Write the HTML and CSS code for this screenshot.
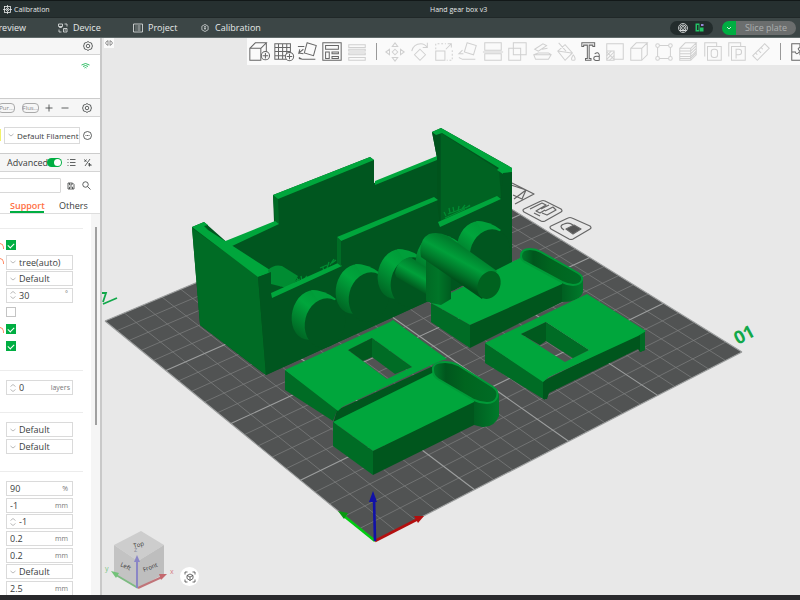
FILE: index.html
```html
<!DOCTYPE html>
<html lang="en">
<head>
<meta charset="utf-8">
<title>Hand gear box v3</title>
<link rel="stylesheet" href="styles.css">
</head>
<body>
<div class="app">
  <header class="titlebar">
    <a class="crumb" href="#calibration"><svg class="ic9" viewBox="0 0 18 18"><rect x="3" y="3" width="12" height="12"/><path d="M9 0v7M9 11v7M0 9h7M11 9h7M6 6l6 6M12 6l-6 6"/></svg>Calibration</a>
    <h1>Hand gear box v3</h1>
  </header>
  <nav class="tabs">
    <a class="tab tab-preview" href="#preview">Preview</a>
    <a class="tab tab-device" href="#device"><svg class="ic10" viewBox="0 0 20 20"><path d="M1 2h8v5H1zM3 7v2h4V7M13 2h5v5M2 13v5h5M11 11h7v7h-7zM13 14h3"/></svg>Device</a>
    <a class="tab tab-project" href="#project"><svg class="ic10" viewBox="0 0 20 20"><path d="M1 2h18v16H1zM5 6h2M9 6h6M5 10h2M9 10h6M5 14h2M9 14h6"/></svg>Project</a>
    <a class="tab tab-calib" href="#calibration"><svg class="ic8" viewBox="0 0 18 18"><path d="M9 1l7 4v8l-7 4-7-4V5z"/><path d="M9 5v8M7 7l2-2 2 2M7 10h4"/></svg>Calibration</a>
    <div class="actions">
      <div class="pill">
        <button type="button" aria-label="Target"><svg class="ic10" viewBox="0 0 20 20"><circle cx="10" cy="10" r="9"/><circle cx="10" cy="10" r="6"/><circle cx="10" cy="10" r="3"/><path d="M3 15h14"/></svg></button>
        <button type="button" aria-label="Layout"><svg class="ic9" viewBox="0 0 18 18"><path class="lime" d="M1 1h8v16H1zM10 9h7v8h-7z"/><path class="core" d="M4 4h3v10H4z"/><path class="violet" d="M12 2h5v4h-5z"/></svg></button>
      </div>
      <div class="slice">
        <button type="button" class="slice-menu" aria-label="Slice options"><svg class="ic6" viewBox="0 0 12 12"><path d="M2 4l4 4 4-4"/></svg></button>
        <button type="button" class="slice-go">Slice plate</button>
      </div>
    </div>
  </nav>

  <main class="work">
    <aside class="side">
      <div class="bar bar-top"><button type="button" aria-label="Printer settings"><svg class="ic10" viewBox="0 0 20 20"><path d="M10 1l3 2 4 1 1 4 1 2-1 2-1 4-4 1-3 2-3-2-4-1-1-4-1-2 1-2 1-4 4-1z"/><circle cx="10" cy="10" r="3.5"/></svg></button></div>
      <div class="printer"><svg class="wifi" viewBox="0 0 18 14"><path d="M1 5q8-6 16 0M4 8q5-4 10 0M7 11q2-2 4 0"/></svg></div>
      <div class="bar bar-fil">
        <button type="button" class="chip chip-cut">Pur...</button>
        <button type="button" class="chip">Flus...</button>
        <button type="button" class="add" aria-label="Add filament"><svg class="ic8" viewBox="0 0 16 16"><path d="M8 1v14M1 8h14"/></svg></button>
        <button type="button" class="rem" aria-label="Remove filament"><svg class="ic8" viewBox="0 0 16 16"><path d="M1 8h14"/></svg></button>
        <button type="button" class="gear" aria-label="Filament settings"><svg class="ic10" viewBox="0 0 20 20"><path d="M10 1l3 2 4 1 1 4 1 2-1 2-1 4-4 1-3 2-3-2-4-1-1-4-1-2 1-2 1-4 4-1z"/><circle cx="10" cy="10" r="3.5"/></svg></button>
      </div>
      <div class="filament">
        <span class="swatch"></span>
        <label class="sel sel-fil"><svg class="ic6" viewBox="0 0 12 12"><path d="M1 4l5 4 5-4"/></svg><select aria-label="Filament"><option>Default Filament</option></select></label>
        <button type="button" aria-label="More"><svg class="ic9" viewBox="0 0 18 18"><circle cx="9" cy="9" r="8"/><path d="M5 9h2M8 9h2M11 9h2"/></svg></button>
      </div>
      <div class="bar bar-adv">
        <label class="adv" for="adv">Advanced</label><input id="adv" class="toggle" type="checkbox" checked>
        <button type="button" aria-label="List"><svg class="ic9" viewBox="0 0 18 18"><path d="M1 3h2M6 3h11M1 9h2M6 9h11M1 15h2M6 15h11"/></svg></button>
        <button type="button" aria-label="Compare"><svg class="ic9" viewBox="0 0 18 18"><path d="M4 16L14 2M2 3l5 4M3 8l4-5M11 10l5 5M10 14h7M13 10v7"/></svg></button>
      </div>
      <div class="find">
        <input type="text" aria-label="Search preset">
        <button type="button" aria-label="Save"><svg class="ic8" viewBox="0 0 16 16"><path d="M2 2h9l3 3v9H2zM5 2v4h5V2M5 14v-4h6v4"/></svg></button>
        <button type="button" aria-label="Search"><svg class="ic9" viewBox="0 0 18 18"><circle cx="7" cy="7" r="5.5"/><path d="M11 11l6 6"/></svg></button>
      </div>
      <div class="subtabs"><a class="on" href="#support">Support</a><a href="#others">Others</a></div>
      <div class="params">
        <div class="list">
          <section class="rows7">
            <div class="row undo"><input type="checkbox" aria-label="Enable support" checked></div>
            <div class="row undo"><label class="sel"><svg class="ic6" viewBox="0 0 12 12"><path d="M1 4l5 4 5-4"/></svg><select aria-label="Type"><option>tree(auto)</option></select></label></div>
            <div class="row"><label class="sel"><svg class="ic6" viewBox="0 0 12 12"><path d="M1 4l5 4 5-4"/></svg><select aria-label="Style"><option>Default</option></select></label></div>
            <div class="row"><label class="sel"><svg class="ic6 spin" viewBox="0 0 12 20"><path d="M1 7l5-4 5 4M1 13l5 4 5-4"/></svg><input type="text" value="30" aria-label="Threshold angle"><span class="deg">°</span></label></div>
            <div class="row"><input type="checkbox" aria-label="On build plate only"></div>
            <div class="row undo"><input type="checkbox" aria-label="Critical regions only" checked></div>
            <div class="row"><input type="checkbox" aria-label="Remove small overhangs" checked></div>
          </section>
          <section class="rows1">
            <div class="row"><label class="sel"><svg class="ic6 spin" viewBox="0 0 12 20"><path d="M1 7l5-4 5 4M1 13l5 4 5-4"/></svg><input type="text" value="0" aria-label="Raft layers"><span class="wide-unit">layers</span></label></div>
          </section>
          <section class="rows2">
            <div class="row"><label class="sel"><svg class="ic6" viewBox="0 0 12 12"><path d="M1 4l5 4 5-4"/></svg><select aria-label="Base filament"><option>Default</option></select></label></div>
            <div class="row"><label class="sel"><svg class="ic6" viewBox="0 0 12 12"><path d="M1 4l5 4 5-4"/></svg><select aria-label="Interface filament"><option>Default</option></select></label></div>
          </section>
          <section class="rows7">
            <div class="row"><label class="sel"><input type="text" value="90" aria-label="First layer density"><span>%</span></label></div>
            <div class="row"><label class="sel"><input type="text" value="-1" aria-label="First layer expansion"><span>mm</span></label></div>
            <div class="row"><label class="sel"><svg class="ic6 spin" viewBox="0 0 12 20"><path d="M1 7l5-4 5 4M1 13l5 4 5-4"/></svg><input type="text" value="-1" aria-label="Wall loops"></label></div>
            <div class="row"><label class="sel"><input type="text" value="0.2" aria-label="Top Z distance"><span>mm</span></label></div>
            <div class="row"><label class="sel"><input type="text" value="0.2" aria-label="Bottom Z distance"><span>mm</span></label></div>
            <div class="row"><label class="sel"><svg class="ic6" viewBox="0 0 12 12"><path d="M1 4l5 4 5-4"/></svg><select aria-label="Base pattern"><option>Default</option></select></label></div>
            <div class="row"><label class="sel"><input type="text" value="2.5" aria-label="Base pattern spacing"><span>mm</span></label></div>
          </section>
        </div>
        <div class="scroll"><i></i></div>
      </div>
    </aside>

    <div class="view">
      <svg class="scene" viewBox="102 38 698 557" preserveAspectRatio="xMinYMin slice" role="img" aria-label="Build plate with gear box parts">
        <defs>
          <linearGradient id="shaft" gradientUnits="userSpaceOnUse" x1="465" y1="248" x2="449" y2="277"><stop offset="0" stop-color="#007c2c"/><stop offset=".4" stop-color="#009f3a"/><stop offset=".7" stop-color="#007a2b"/><stop offset="1" stop-color="#004f1a"/></linearGradient>
          <linearGradient id="stub" gradientUnits="userSpaceOnUse" x1="418" y1="263" x2="406" y2="284"><stop offset="0" stop-color="#007c2c"/><stop offset=".45" stop-color="#00a03a"/><stop offset="1" stop-color="#00561d"/></linearGradient>
          <linearGradient id="disc" gradientUnits="userSpaceOnUse" x1="320" y1="290" x2="298" y2="338"><stop offset="0" stop-color="#009536"/><stop offset=".4" stop-color="#00a63c"/><stop offset="1" stop-color="#006122"/></linearGradient>
          <linearGradient id="post"><stop offset="0" stop-color="#006a24"/><stop offset=".5" stop-color="#007528"/><stop offset="1" stop-color="#005c20"/></linearGradient>
          <linearGradient id="boss"><stop offset="0" stop-color="#005f21"/><stop offset="1" stop-color="#007b2b"/></linearGradient>
          <linearGradient id="slot"><stop offset="0" stop-color="#007a2b"/><stop offset=".2" stop-color="#00561d"/><stop offset=".5" stop-color="#00651f"/><stop offset="1" stop-color="#006c25"/></linearGradient>
          <g id="wheel"><ellipse cx="311" cy="315" rx="19" ry="25" transform="rotate(14 311 315)" fill="url(#disc)"/><path d="M311 290q14 0 25 9l-12 12z" fill="#009f3a"/><ellipse cx="325" cy="323" rx="20" ry="25" transform="rotate(14 325 323)" fill="#00561f"/></g>
        </defs>
        <path d="M105 321L375 541 742 352 455 174z" fill="#515353"/>
        <g id="grid" fill="none"></g>

        <g fill="none" stroke="#666" stroke-width="1.2" stroke-linejoin="round">
          <path d="M512 183L534 194 515 204M511 185l15 5-4 9-9-4M514 199l12-9"/>
          <path d="M524 209L541 201q2-1 4 0L561 209q2 2 0 3L545 221q-2 1-4 0L524 212q-2-2 0-3z"/><path d="M530 209l12-6 4 2-10 6 4 2 5-3M541 209l8-4M545 211l8-4 3 3-9 5-5-2M534 213l6 3"/>
          <path d="M551 226L568 218q2-1 4 0L590 226q2 2 0 3L573 239q-2 1-4 0L551 229q-2-2 0-3z"/><path d="M564 230q-6-4 0-6 5-2 9 1"/><path d="M566 229l8-4 7 4-8 5z" fill="#555"/>
        </g>
        <text x="738" y="345" class="plate-no" transform="rotate(-28 738 345)">01</text>
        <path d="M102 293h4l-3 9M103 304l14-6" fill="none" stroke="#12a84a" stroke-width="1.8"/>

        <!-- gear box shell -->
        <path fill="#00561f" d="M192 227L204 222 230 245 274 222 273 195 370 157 374 160V183L437 158 432 132 441 128 512 168V263L266 375 200 325z"/>
        <path fill="#006322" d="M441 133L499 170 501 197 441 224z"/>
        <path fill="#00531c" d="M432 132L440 134V222L437 222 437 158z"/>
        <path fill="#006c25" d="M192 228L258 276 266 375 200 325z"/>
        <path fill="#006a24" d="M273 195L278 199 279 224 275 222z"/>
        <path fill="#00a63c" d="M273 195L370 157 374 160 278 199zM223 242L275 221 279 224 230 247zM375 181L437 156 437 160 375 185zM432 132L441 128 512 168 512 172 503 174 497 170 499 168 442 133 436 135zM192 227L204 222 208 225V230L270 270 270 273 258 277z"/>
        <path fill="#005a1e" d="M204 226l4-1v5z"/>
        <path fill="#008c32" d="M268 270q6-6 14-4L298 276 291 289 271 284z"/>
        <path fill="none" stroke="#008c32" stroke-width="1.3" d="M280 286l6-3M286 286l5-5M288 284l6-4M292 285l2-7M294 282l6-3M299 284l-2-6M302 281l-1-5M303 281l4-5M320 268l7-3M324 273l-1-6M327 268l2-6M330 265l4-6M332 263l4-3M446 216l-2-4M450 213l-1-5M454 212l-1-5M458 211l1-5M462 209l3-4M466 208l4-3M448 214l22-8M445 218l20-9"/>
        <path fill="#00561f" d="M271 297L338 266 337 240 437 201 440 225 501 198 503 173 512 172V263L266 375 258 277 271 272z"/>
        <path fill="#00a63c" d="M271 293L338 263 342 266 272 298zM337 237L434 197 438 200 341 241zM438 222L497 196 501 199 440 227z"/>
        <path fill="#006c25" d="M337 237L341 241V266L337 263z"/>
        <use href="#wheel"/><use href="#wheel" x="44" y="-26"/><use href="#wheel" x="86" y="-41"/><use href="#wheel" x="124" y="-56"/><use href="#wheel" x="165" y="-69"/>
        <path fill="url(#stub)" d="M395 273Q397 260 410 257L431 270V297L396 277z"/>

        <!-- block with slot, rear -->
        <path fill="#00a63c" d="M431 303L520 258 532 250 575 280 562 286 470 325z"/>
        <path fill="#006c25" d="M431 303L470 325V348L431 322z"/>
        <path fill="#00561d" d="M470 325L562 284V302L470 348z"/>
        <path fill="url(#boss)" d="M562 280L583 277V292Q580 302 562 302z"/>
        <path class="slot" d="M521 256Q521 249 530 249 536 249 541 252L578 273Q583 276 582 280 580 285 573 285 568 285 562 282L525 262Q521 260 521 256z"/>
        <path fill="url(#post)" d="M426 258L451 272V299L441 305 431 303 426 301z"/>
        <path fill="url(#shaft)" d="M421 257Q418 240 429 234 438 231 448 236L497 271 482 299z"/>
        <ellipse cx="489" cy="285" rx="11" ry="14.5" transform="rotate(24 489 285)" fill="#00621f"/>

        <!-- frame plate, front left -->
        <path fill="#006c25" d="M285 370L338 408 333 421 285 390z"/>
        <path fill="#00561d" d="M337 410L442 362V372L333 424z"/>
        <path fill="#00a63c" fill-rule="evenodd" d="M285 370L390 322 393 320 447 359 440 361 342 407 338 411zM348 350L387 379 412 367 372 338z"/>
        <path fill="#005a1e" d="M348 350L372 338V357L363 361z"/><path fill="#006c25" d="M372 338L412 367 395 374 372 357z"/>

        <!-- block with slot, front -->
        <path fill="#00a63c" d="M333 422L432 373 445 362 487 400 474 404 373 451z"/>
        <path fill="#006c25" d="M333 422L373 451V475L333 446z"/>
        <path fill="#00561d" d="M373 451L474 402V425L373 475z"/>
        <path fill="url(#boss)" d="M474 400L499 394V416Q494 428 482 427L474 425z"/>
        <path class="slot" d="M433 370Q432 362 445 362 452 362 458 365L493 387Q499 391 497 397 495 403 487 403 480 403 474 400L438 379Q433 376 433 370z"/>

        <!-- frame plate, front right -->
        <path fill="#006c25" d="M485 343L543 381 545 400 485 363z"/>
        <path fill="#00561d" d="M543 381L645 330V350L640 352 638 349 549 393 547 399 543 399z"/>
        <path fill="#006c25" d="M640 333L645 331V350L640 352z"/>
        <path fill="#00a63c" fill-rule="evenodd" d="M485 343L587 294 646 331 638 336 549 377 543 382zM521 334L565 362 589 350 546 322z"/>
        <path fill="#005a1e" d="M521 334L546 322V341L540 345z"/><path fill="#006c25" d="M546 322L589 350 573 358 546 341z"/>

        <!-- origin axes -->
        <g stroke-width="2.6"><path stroke="#0c1" d="M375 541L344 516"/><path stroke="#b30f0f" d="M375 541L418 519"/><path stroke="#1111a8" d="M375 541L374 498"/></g>
        <path fill="#0a9a12" d="M338 511l10 2-4 6z"/><path fill="#b30f0f" d="M424 516l-10 0 4 7z"/><path fill="#1111a8" d="M373 491l-4 11h8z"/>

        <!-- orientation cube -->
        <path fill="#cdcdcd" d="M114 545L141 531 164 545 138 561z"/><path fill="#c3c3c3" d="M114 545L138 561V588L114 574z"/><path fill="#bebebe" d="M138 561L164 545V574L138 588z"/>
        <g class="cube"><text x="134" y="548" transform="rotate(-14 134 548)">Top</text><text x="120" y="566" transform="rotate(24 120 566)">Left</text><text x="144" y="572" transform="rotate(-22 144 572)">Front</text></g>
        <g stroke-width="2"><path stroke="#7dbb82" d="M138 588L116 575"/><path stroke="#c07479" d="M138 588L162 577"/><path stroke="#8a86c6" d="M137 588V560"/></g>
        <path fill="#72c278" d="M111 571l8 2-3 5z"/><path fill="#c4686e" d="M167 574l-8 0 2 6z"/><path fill="#8a86c6" d="M137 555l-3 7h6z"/>
        <g class="axis"><text x="105" y="571" fill="#79c484">y</text><text x="170" y="574" fill="#d78088">x</text><text x="134" y="552" fill="#8f8f9d">z</text></g>
      </svg>

      <button type="button" class="fold" aria-label="Collapse sidebar"><svg class="ic8" viewBox="0 0 16 16"><path d="M6 4H4L1 8l3 4h2M10 4h2l3 4-3 4h-2M6 3v10M10 3v10"/></svg></button>
      <div class="tools">
        <button type="button" aria-label="Add"><svg viewBox="0 0 24 24"><path d="M2 8h12v13H2zM2 8l6-6h12l-6 6M20 2v10"/><circle class="fill" cx="19" cy="16" r="4.5"/><path d="M19 13v6M16 16h6"/></svg></button>
        <button type="button" aria-label="Add plate"><svg viewBox="0 0 24 24"><path d="M2 3h17v17H2zM6 3v17M10.500 3v17M15 3v17M2 7h17M2 11.500h17M2 16h17"/><circle class="fill" cx="18" cy="17" r="4.5"/><path d="M18 14v6M15 17h6"/></svg></button>
        <button type="button" aria-label="Auto orient"><svg viewBox="0 0 24 24"><path d="M11 2l10 3-3 11-10-3zM1 6h7M7 9l-5 4 1-4M2 13l5 1M2 18l4 2h14M6 20l-4-1"/></svg></button>
        <button type="button" aria-label="Arrange"><svg viewBox="0 0 24 24"><path d="M2 2h20v19H2zM5 5h14v4H5zM5 12h4v7H5zM12 12h7v2h-7zM12 17h7v2h-7z"/></svg></button>
        <button type="button" class="pale" aria-label="Layers"><svg viewBox="0 0 24 24"><path d="M3 4h18v3H3zM3 9h18v2H3zM3 13h18v2H3zM3 18h18v3H3z"/></svg></button>
        <span class="sep"></span>
        <button type="button" class="pale" aria-label="Move"><svg viewBox="0 0 24 24"><path d="M12 2l3 4h-6zM12 22l3-4h-6zM2 12l4-3v6zM22 12l-4-3v6zM12 9l3 3-3 3-3-3z"/></svg></button>
        <button type="button" class="pale" aria-label="Rotate"><svg viewBox="0 0 24 24"><path d="M12 9l6 6-6 6-6-6zM3 11q2-8 10-8 4 0 7 4M20 2v5h-5"/></svg></button>
        <button type="button" class="pale" aria-label="Scale"><svg viewBox="0 0 24 24"><path d="M3 11h10v10H3zM14 9l6-6M16 3h4v4"/><path stroke-dasharray="2 2" d="M3 9V3h11M21 10v11h-6"/></svg></button>
        <button type="button" class="pale" aria-label="Lay on face"><svg viewBox="0 0 24 24"><path d="M11 2l10 3-3 10-10-3zM6 10l-4 4h5M2 18l4 2h14"/></svg></button>
        <button type="button" class="pale" aria-label="Cut"><svg viewBox="0 0 24 24"><path d="M3 2h18v8H3zM3 14h18v7H3zM1 12h22"/></svg></button>
        <button type="button" class="pale" aria-label="Boolean"><svg viewBox="0 0 24 24"><path d="M8 2h14v13H8zM3 8h13v13H3z"/></svg></button>
        <button type="button" class="pale" aria-label="Supports"><svg viewBox="0 0 24 24"><path d="M3 15l5-2h11l3 2-3 5H5zM3 15h19M4 9l9-6 4 2-9 6zM12 9l6-1"/></svg></button>
        <button type="button" class="pale" aria-label="Paint"><svg viewBox="0 0 24 24"><path d="M3 11l8-7 8 9-8 8zM4 2l8 9M3 11l15 2M20 15q4 6 0 6t0-6"/></svg></button>
        <button type="button" aria-label="Text"><svg viewBox="0 0 24 24"><path d="M2 2h14v4h-2V4.500h-4V19h2v2H6v-2h2V4.500H4V6H2z"/><path d="M16 14q4-3 5 1v6q-6 1-6-2t6-2"/></svg></button>
        <button type="button" class="pale" aria-label="Modifier"><svg viewBox="0 0 24 24"><path d="M3 3h18v17H11V11H3zM3 11h8v10H3z"/><path d="M3 20l8-8M3 16l5-5M6 21l5-5M3 12l8 8"/></svg></button>
        <button type="button" class="pale" aria-label="Mesh"><svg viewBox="0 0 24 24"><path d="M3 8h12v13H3zM3 8l6-6h12l-6 6M21 2v13l-6 6"/></svg></button>
        <button type="button" class="pale" aria-label="Simplify"><svg viewBox="0 0 24 24"><path d="M6 5h12M6 19h12M5 6v12M19 6v12"/><circle class="fill" cx="5" cy="5" r="2"/><circle class="fill" cx="19" cy="5" r="2"/><circle class="fill" cx="5" cy="19" r="2"/><circle class="fill" cx="19" cy="19" r="2"/></svg></button>
        <button type="button" class="pale" aria-label="Variable layers"><svg viewBox="0 0 24 24"><path d="M3 8h12v13H3zM3 8l6-6h12l-6 6M21 2v13l-6 6M3 11h12l6-6M3 14h12l6-6M3 17h12l6-6M3 19h12l6-6"/></svg></button>
        <button type="button" class="pale" aria-label="Objects"><svg viewBox="0 0 24 24"><path d="M6 6h15v15H6zM3 17V2h13v4"/><rect x="10" y="9" width="7" height="9" rx="3"/></svg></button>
        <button type="button" class="pale" aria-label="Parts"><svg viewBox="0 0 24 24"><path d="M6 6h15v15H6zM3 17V2h13v4M11 19V9h3q3 0 3 3t-3 3h-3"/></svg></button>
        <button type="button" class="pale" aria-label="Measure"><svg viewBox="0 0 24 24"><path d="M3 16L16 3l5 5L8 21zM6 13l2 2M9 10l3 3M12 7l2 2"/></svg></button>
        <span class="sep"></span>
        <button type="button" aria-label="Assembly"><svg viewBox="0 0 24 24"><path d="M3 3h18v18H3zM12 3v4q-4 1 0 4v4q4 2 0 6M3 12h4q1 4 4 0h10"/></svg></button>
      </div>
      <button type="button" class="fit" aria-label="Fit view"><svg viewBox="0 0 24 24"><path d="M2 7V2h5M17 2h5v5M22 17v5h-5M7 22H2v-5M12 6l6 3v6l-6 4-6-4V9zM6 9l6 3 6-3M12 12v7"/></svg></button>
    </div>
  </main>
  <footer class="foot"></footer>
</div>
<script src="scene.js"></script>
</body>
</html>
```
FILE: styles.css
```css
* { box-sizing: border-box; }
body { margin: 0; font-family: "Open Sans", "Noto Sans", sans-serif; font-size: 9px; color: #3a3d3d; }
button { border: 0; padding: 0; margin: 0; background: none; font: inherit; color: inherit; display: flex; align-items: center; justify-content: center; }
a { color: inherit; text-decoration: none; }
svg { display: block; flex: none; }
button svg, a svg, .sel svg, .wifi { fill: none; stroke: currentColor; stroke-width: 1.6; }
.ic6 { width: 6px; height: 6px; }
.ic8 { width: 8px; height: 8px; }
.ic9 { width: 9px; height: 9px; }
.ic10 { width: 10px; height: 10px; }

.app { height: 100vh; display: flex; flex-direction: column; overflow: hidden; }
.titlebar { height: 17px; flex: none; background: #263030; border-top: 1px solid #121818; color: #e6e9e9; display: grid; grid-template-columns: 430px 1fr; align-items: center; font-size: 7px; }
.titlebar h1 { margin: 0; font-size: 7px; font-weight: 400; }
.crumb { display: flex; align-items: center; gap: 2px; padding-left: 3px; }

.tabs { height: 21px; flex: none; background: #3c4646; border-top: 1px solid #202828; border-bottom: 1px solid #606a6a; color: #e6e9e9; display: flex; align-items: center; overflow: hidden; }
.tab { display: flex; align-items: center; gap: 5px; flex: none; }
.tab-preview { margin-left: -7px; width: 65px; }
.tab-device { width: 75px; }
.tab-project { width: 68px; }
.tab-calib { gap: 6px; }
.actions { margin-left: auto; display: flex; gap: 9px; padding-right: 4px; }
.pill { display: flex; align-items: center; gap: 7px; height: 14px; padding: 0 9px 0 8px; border-radius: 7px; background: #232c2c; }
.lime { fill: #23c466; stroke: none; }
.core { fill: #232c2c; stroke: none; }
.violet { fill: #9a86d8; stroke: none; }
.slice { display: flex; height: 14px; border-radius: 7px; overflow: hidden; }
.slice-menu { width: 14px; background: #00ae42; color: #fff; }
.slice-go { width: 60px; background: #6b6e6e; color: #abaeae; }

.work { flex: 1; min-height: 0; display: flex; background: #e8e8e8; }
.side { width: 102px; flex: none; background: #fff; border-right: 2px solid #c9c9c9; display: flex; flex-direction: column; overflow: hidden; }
.bar { flex: none; display: flex; align-items: center; background: #f6f6f6; border-bottom: 1px solid #d4d4d4; }
.bar-top { height: 17px; justify-content: flex-end; padding-right: 7px; }
.printer { height: 44px; flex: none; padding: 7px 10px; display: flex; justify-content: flex-end; border-bottom: 1px solid #ccc; }
.wifi { width: 9px; height: 8px; color: #00ae42; }
.bar-fil { height: 18px; }
.chip { height: 10px; width: 17px; border: 1px solid #aaa; border-radius: 4px; font-size: 6px; color: #888; overflow: hidden; white-space: nowrap; flex: none; }
.chip-cut { margin-left: -2px; margin-right: 7px; }
.add { margin-left: 6px; }
.rem { margin-left: 8px; }
.gear { margin-left: auto; margin-right: 8px; }
.filament { height: 37px; flex: none; display: flex; align-items: center; border-bottom: 1px solid #ccc; }
.swatch { width: 1px; height: 12px; background: #f2f26a; margin-right: 3px; }
.sel { display: flex; align-items: center; gap: 3px; width: 67px; height: 15px; padding: 0 4px 0 3px; border: 1px solid #dadada; background: #fff; color: #aaa; }
.sel select, .sel input { appearance: none; flex: 1; min-width: 0; width: 0; border: 0; padding: 0; margin: 0; background: none; font: inherit; color: #3a3d3d; outline: 0; }
.sel span { font-size: 7px; color: #777; }
.sel .wide-unit { margin-right: -2px; }
.sel .deg { align-self: flex-start; }
.sel .spin { height: 12px; }
.sel-fil { width: 76px; height: 17px; padding: 0 0 0 3px; font-size: 8px; margin-right: 3px; }
.bar-adv { height: 18px; padding-left: 7px; }
.adv { width: 40px; }
.toggle { appearance: none; width: 15px; height: 9px; margin: 0 5px 0 0; border-radius: 5px; background: #00ae42; display: flex; justify-content: flex-end; padding: 1px; }
.toggle::before { content: ""; width: 7px; height: 7px; border-radius: 50%; background: #fff; }
.bar-adv button { margin-right: 7px; }
.find { height: 27px; flex: none; display: flex; align-items: center; }
.find input { width: 62px; height: 15px; margin: 0 6px 0 -1px; border: 1px solid #d8d8d8; border-radius: 1px; padding: 0 3px; font: inherit; }
.find button { margin-right: 7px; }
.subtabs { height: 15px; flex: none; display: flex; gap: 15px; padding-left: 10px; border-bottom: 1px solid #ddd; }
.subtabs a { line-height: 13px; }
.subtabs .on { width: 34px; color: #ff6f43; font-weight: 600; border-bottom: 2px solid #00ae42; white-space: nowrap; }

.params { flex: 1; min-height: 0; display: flex; }
.list { flex: 1; overflow: hidden; padding-top: 14px; }
.list section { border-top: 1px solid #ececec; margin-right: 8px; padding: 8px 0 16px 6px; display: grid; grid-auto-rows: 1fr; align-items: center; box-sizing: content-box; }
.rows1 { height: 17px; }
.rows2 { height: 34px; }
.rows7 { height: 117px; }
.row { position: relative; display: flex; }
.row input[type=checkbox] { appearance: none; width: 10px; height: 10px; margin: 0; border: 1px solid #c4c4c4; display: flex; justify-content: center; }
.row input[type=checkbox]:checked { background: #00ae42; border-color: #00ae42; }
.row input:checked::before { content: ""; width: 5px; height: 3px; margin-top: 2px; border: solid #fff; border-width: 0 0 1px 1px; transform: rotate(-45deg); }
.undo::before { content: ""; position: absolute; left: -9px; top: 3px; width: 6px; height: 5px; border: solid #ff8a65; border-width: 1px 1px 0 0; border-radius: 0 5px 0 0; }
.scroll { width: 9px; background: #f5f5f5; padding: 13px 3px 0 4px; }
.scroll i { display: block; height: 198px; background: #a0a0a0; }

.view { flex: 1; min-width: 0; position: relative; overflow: hidden; }
.scene { width: 100%; height: 100%; }
.minor { stroke: #7f8181; stroke-width: 0.7; }
.major { stroke: #9c9e9e; stroke-width: 1.1; }
.slot { fill: url(#slot); stroke: #009a38; stroke-width: 2px; }
.plate-no { font-size: 18px; font-weight: 700; fill: #12a84a; }
.cube { font-size: 6px; fill: #333; }
.axis { font-size: 7px; }
.fold { position: absolute; left: 2px; top: 0; width: 10px; height: 10px; background: #fafafa; color: #777; }
.tools { position: absolute; left: 145px; right: -12px; top: 0; height: 27px; background: #fafafa; display: grid; grid-template-columns: repeat(5, 1fr) 14px repeat(16, 1fr) 14px 1fr; align-items: center; color: #666; }
.tools svg { width: 22px; height: 22px; stroke-width: 1.1; }
.tools .fill { fill: #fafafa; }
.tools .pale { color: #d0d0d0; }
.sep { width: 1px; height: 17px; background: #999; justify-self: center; }
.fit { position: absolute; left: 78px; bottom: 9px; width: 19px; height: 19px; border-radius: 50%; background: #fff; color: #444; }
.fit svg { width: 12px; height: 12px; }
.foot { height: 5px; flex: none; background: #29292c; }
```
FILE: scene.js
```js
// Projects the unit square of the build plate onto the view and rules it into cells.
const CELLS = 20;
const O = [375, 541], R = [742, 352], T = [455, 174], L = [105, 321];
const d1 = [R[0] - T[0], R[1] - T[1]];
const d2 = [L[0] - T[0], L[1] - T[1]];
const s = [O[0] - R[0] + T[0] - L[0], O[1] - R[1] + T[1] - L[1]];
const den = d1[0] * d2[1] - d2[0] * d1[1];
const g = (s[0] * d2[1] - s[1] * d2[0]) / den;
const h = (d1[0] * s[1] - d1[1] * s[0]) / den;

function project(u, v) {
  const w = 1 + g * u + h * v;
  return [0, 1].map(i =>
    ((O[i] + (R[i] - O[i] + g * R[i]) * u + (L[i] - O[i] + h * L[i]) * v) / w).toFixed(1)
  ).join(" ");
}

const grid = document.getElementById("grid");
for (const major of [false, true]) {
  let d = "";
  for (let i = 0; i <= CELLS; i++) {
    if ((i % 5 === 0) !== major) continue;
    const t = i / CELLS;
    d += `M${project(t, 0)}L${project(t, 1)}M${project(0, t)}L${project(1, t)}`;
  }
  const path = document.createElementNS("http://www.w3.org/2000/svg", "path");
  path.setAttribute("d", d);
  path.setAttribute("class", major ? "major" : "minor");
  grid.append(path);
}
```
